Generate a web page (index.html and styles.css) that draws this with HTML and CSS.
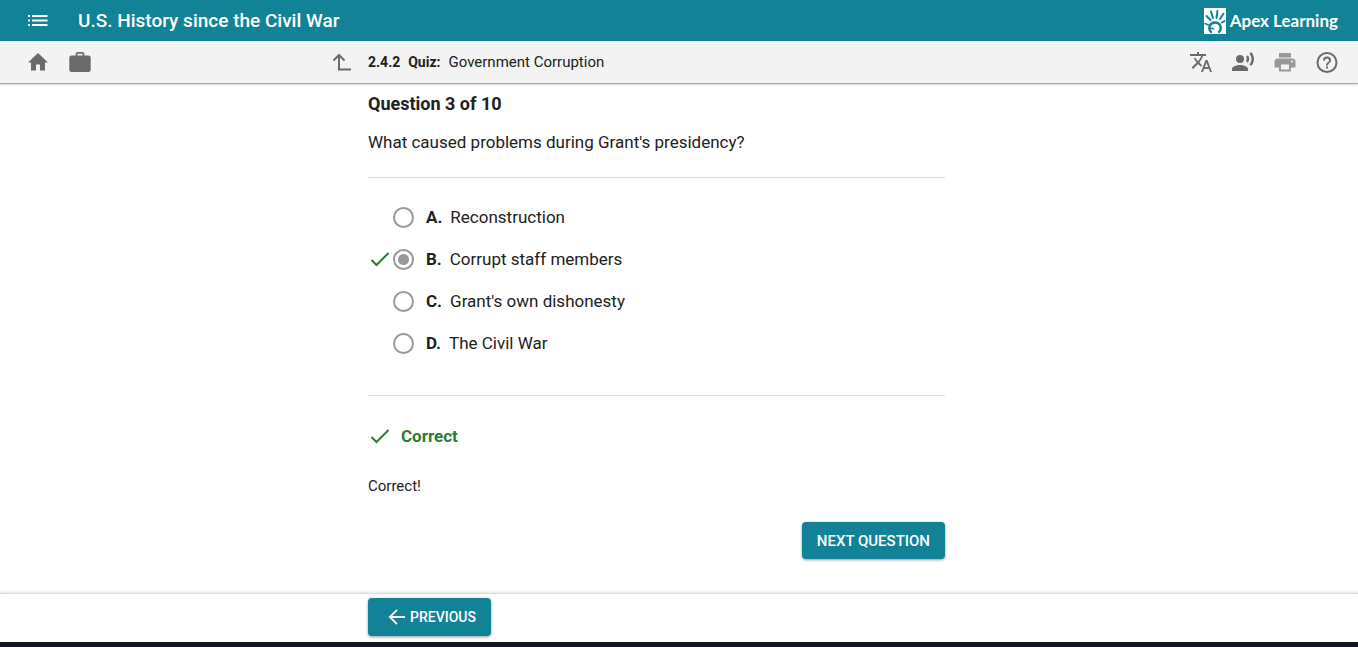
FILE: index.html
```html
<!DOCTYPE html>
<html lang="en">

<head>
    <meta charset="UTF-8">
    <meta name="viewport" content="width=device-width, initial-scale=1.0">
    <title>U.S. History since the Civil War</title>
    <link rel="stylesheet" href="styles.css">
</head>

<body>
    <header class="topbar">
        <button type="button" class="icon-button" aria-label="Menu">
            <svg class="icon" viewBox="0 0 24 24">
                <path d="M2 6h2v2H2zM2 10.500h2v2H2zM2 15h2v2H2zM6 6h15.500v2H6zM6 10.500h15.500v2H6zM6 15h15.500v2H6z" />
            </svg>
        </button>
        <h1 class="course-title">U.S. History since the Civil War</h1>
        <a href="#" class="brand">
            <svg class="brand-mark" viewBox="0 0 22 26">
                <rect width="22" height="26" fill="#fff" />
                <g fill="none" stroke="#128297" stroke-linecap="round">
                    <path stroke-width="2" d="M2.500 8L6.500 12M7 3.500L9 10M13.500 3L12.500 10M19.500 5.500L16 11M20.500 13L18 14.500" />
                    <path stroke-width="2.400" d="M7 24C3.500 20 6 14.500 11 14.500C16.500 14.500 18.500 20.500 15 24" />
                    <path stroke-width="1.600" d="M5 20.500C7 20 8.500 20 9.500 21M1 15.500L4.500 17" />
                </g>
            </svg>
            <span class="brand-name">Apex Learning</span>
        </a>
    </header>

    <nav class="toolbar">
        <div class="toolbar-left">
            <button type="button" class="icon-button" aria-label="Home">
                <svg class="icon" viewBox="0 0 24 24">
                    <path d="M10 20.500v-6h4v6h5v-8h3L12 3 2 12.500h3v8z" />
                </svg>
            </button>
            <button type="button" class="icon-button" aria-label="Portfolio">
                <svg class="icon" viewBox="0 0 24 24">
                    <path fill-rule="evenodd" d="M9.500 2h5a1.800 1.800 0 0 1 1.800 1.800V5.500h4.200A2.200 2.200 0 0 1 22.700 7.700v12.100a2.200 2.200 0 0 1-2.200 2.200H3.500A2.200 2.200 0 0 1 1.300 19.800V7.700A2.200 2.200 0 0 1 3.500 5.500h4.200V3.800A1.800 1.800 0 0 1 9.500 2zM9.500 3.800v1.700h5V3.800z" />
                </svg>
            </button>
            <button type="button" class="icon-button up-button" aria-label="Up one level">
                <svg class="icon" viewBox="0 0 24 24">
                    <path fill="none" stroke="currentColor" stroke-width="2" d="M3.500 10.500L9 5l5.500 5.500M9 5.500V19.500h12" />
                </svg>
            </button>
        </div>
        <div class="activity"><strong>2.4.2</strong><strong>Quiz:</strong><span>Government Corruption</span></div>
        <div class="toolbar-right">
            <button type="button" class="icon-button" aria-label="Translate">
                <svg class="icon" viewBox="0 0 24 24">
                    <path d="M12.870 15.070l-2.540-2.510.03-.03A17.520 17.520 0 0 0 14.070 6H17V4h-7V2H8v2H1v2h11.170C11.500 7.920 10.440 9.750 9 11.350 8.070 10.320 7.300 9.190 6.690 8h-2c.73 1.630 1.730 3.170 2.980 4.560l-5.090 5.020L4 19l5-5 3.110 3.110.76-2.040zM18.500 10h-2L12 22h2l1.120-3h4.750L21 22h2l-4.500-12zm-2.620 7l1.620-4.330L19.120 17h-3.240z" />
                </svg>
            </button>
            <button type="button" class="icon-button" aria-label="Read aloud">
                <svg class="icon" viewBox="0 0 24 24">
                    <circle cx="9" cy="9" r="4" />
                    <path d="M9 15c-2.670 0-8 1.340-8 4v2h16v-2c0-2.660-5.330-4-8-4zM16.760 5.360l-1.680 1.690c.84 1.180.84 2.710 0 3.890l1.680 1.690c2.020-2.020 2.020-5.070 0-7.270zM20.070 2l-1.630 1.630c2.770 3.020 2.770 7.560 0 10.740L20.070 16c3.900-3.890 3.910-9.950 0-14z" />
                </svg>
            </button>
            <button type="button" class="icon-button" aria-label="Print" disabled>
                <svg class="icon" viewBox="0 0 24 24">
                    <path d="M19 8.500H5c-2 0-3.500 1.300-3.500 3v6H6v4h12v-4h4.500v-6c0-1.700-1.500-3-3.500-3zm-3 11H8v-5h8v5zm3-7a1 1 0 1 1 0-2 1 1 0 0 1 0 2zM18 3H6v4.500h12V3z" />
                </svg>
            </button>
            <button type="button" class="icon-button" aria-label="Help">
                <svg class="icon" viewBox="0 0 24 24">
                    <circle cx="12" cy="12.500" r="9.500" fill="none" stroke="currentColor" stroke-width="2" />
                    <path d="M11 16.500h2v2h-2zM12 6.500a4 4 0 0 0-4 4h2a2 2 0 1 1 4 0c0 2-3 1.750-3 5h2c0-2.250 3-2.500 3-5a4 4 0 0 0-4-4z" />
                </svg>
            </button>
        </div>
    </nav>

    <main class="page">
        <form class="column question">
            <h2>Question 3 of 10</h2>
            <p class="prompt" id="prompt">What caused problems during Grant's presidency?</p>
            <div class="choices" role="radiogroup" aria-labelledby="prompt">
                <div class="choice">
                    <input type="radio" name="answer" id="answer-a">
                    <label for="answer-a"><strong>A.</strong>Reconstruction</label>
                </div>
                <div class="choice">
                    <svg class="check" viewBox="0 0 20 18">
                        <path d="M1.500 10l5 5L18.500 3" />
                    </svg>
                    <input type="radio" name="answer" id="answer-b" checked>
                    <label for="answer-b"><strong>B.</strong>Corrupt staff members</label>
                </div>
                <div class="choice">
                    <input type="radio" name="answer" id="answer-c">
                    <label for="answer-c"><strong>C.</strong>Grant's own dishonesty</label>
                </div>
                <div class="choice">
                    <input type="radio" name="answer" id="answer-d">
                    <label for="answer-d"><strong>D.</strong>The Civil War</label>
                </div>
            </div>
            <div class="result">
                <svg class="check" viewBox="0 0 20 18">
                    <path d="M1.500 10l5 5L18.500 3" />
                </svg>
                <strong>Correct</strong>
            </div>
            <p class="feedback">Correct!</p>
            <button type="button" class="button next">NEXT QUESTION</button>
        </form>
    </main>

    <footer class="footer">
        <div class="column">
            <button type="button" class="button previous">
                <svg class="arrow" viewBox="0 0 20 20">
                    <path d="M19 10H2.500M10 2l-8 8 8 8" />
                </svg>
                PREVIOUS
            </button>
        </div>
    </footer>
</body>

</html>
```
FILE: styles.css
```css
* {
    box-sizing: border-box;
}

body {
    display: flex;
    flex-direction: column;
    min-height: 100vh;
    margin: 0;
    font-family: Roboto, sans-serif;
    font-size: 17px;
    color: #212121;
    background-color: #ffffff;
}

button {
    font-family: inherit;
    border: none;
    cursor: pointer;
}

.icon-button {
    display: flex;
    padding: 0;
    color: #6b6b6b;
    background: none;
}

.icon-button:disabled {
    color: #999999;
    cursor: default;
}

.icon {
    width: 24px;
    height: 24px;
    fill: currentColor;
}

/* Header */
.topbar {
    display: flex;
    align-items: center;
    height: 41px;
    padding: 0 20px 0 26px;
    background-color: #128297;
}

.topbar .icon-button {
    color: #ffffff;
}

.course-title {
    flex: 1;
    margin: 0 0 0 28px;
    font-size: 19px;
    font-weight: 500;
    line-height: 24px;
    color: #ffffff;
}

.brand {
    display: flex;
    align-items: center;
    gap: 4px;
    color: #ffffff;
    text-decoration: none;
}

.brand-mark {
    width: 22px;
    height: 26px;
}

.brand-name {
    font-family: Lato, sans-serif;
    font-size: 17px;
    font-weight: 700;
}

/* Toolbar */
.toolbar,
.page,
.footer {
    display: grid;
    grid-template-columns: 368fr 577fr 413fr;
}

.toolbar {
    align-items: center;
    height: 43px;
    background-color: #f3f3f3;
    border-bottom: 1px solid #a6a6a6;
    box-shadow: 0 1px 2px rgba(0, 0, 0, 0.15);
}

.toolbar-left,
.toolbar-right {
    display: flex;
    gap: 18px;
}

.toolbar-left {
    padding: 0 14px 0 26px;
}

.toolbar-right {
    justify-content: flex-end;
    padding-right: 19px;
}

.up-button {
    margin-left: auto;
}

.activity {
    display: flex;
    align-items: baseline;
    gap: 8px;
    font-size: 15px;
    line-height: 20px;
}

.activity strong {
    font-size: 14px;
}

.column {
    grid-column: 2;
}

/* Question */
.page {
    flex: 1;
}

.question {
    display: flex;
    flex-direction: column;
}

.question h2 {
    margin: 8px 0 0;
    font-size: 18px;
    line-height: 24px;
}

.prompt {
    margin: 0;
    padding: 14px 0 23px;
    line-height: 24px;
    border-bottom: 1px solid #dddddd;
}

.choices {
    padding: 18px 0 31px;
    border-bottom: 1px solid #dddddd;
}

.choice {
    display: flex;
    align-items: center;
    height: 42px;
    padding-left: 25px;
}

.check {
    width: 20px;
    height: 18px;
    fill: none;
    stroke: #2a7d2e;
    stroke-width: 2;
}

.choice .check {
    margin-left: -23px;
    margin-right: 3px;
}

.choice input {
    display: grid;
    place-content: center;
    width: 21px;
    height: 21px;
    margin: 0 12px 0 0;
    appearance: none;
    border: 2px solid #999999;
    border-radius: 50%;
}

.choice input:checked::before {
    content: "";
    width: 11px;
    height: 11px;
    border-radius: 50%;
    background-color: #999999;
}

.choice label {
    line-height: 24px;
}

.choice strong {
    margin-right: 8px;
}

.result {
    display: flex;
    align-items: center;
    gap: 11px;
    padding: 28px 0 0 2px;
    line-height: 24px;
    color: #2a7d2e;
}

.feedback {
    margin: 28px 0 0;
    font-size: 15px;
    line-height: 20px;
}

.button {
    display: flex;
    align-items: center;
    height: 37px;
    padding: 0 15px;
    font-size: 15px;
    font-weight: 500;
    color: #ffffff;
    background-color: #128297;
    border-radius: 4px;
    box-shadow: 0 1px 3px rgba(0, 0, 0, 0.4);
}

.next {
    align-self: flex-end;
    margin: 26px 0 32px;
}

/* Footer */
.footer {
    align-items: start;
    height: 54px;
    padding-top: 4px;
    border-top: 1px solid #dddddd;
    border-bottom: 5px solid #16162b;
    box-shadow: 0 -1px 3px rgba(0, 0, 0, 0.12);
}

.previous {
    gap: 4px;
    height: 38px;
    padding-left: 20px;
    font-size: 14px;
}

.arrow {
    width: 18px;
    height: 18px;
    fill: none;
    stroke: currentColor;
    stroke-width: 2;
}
```
